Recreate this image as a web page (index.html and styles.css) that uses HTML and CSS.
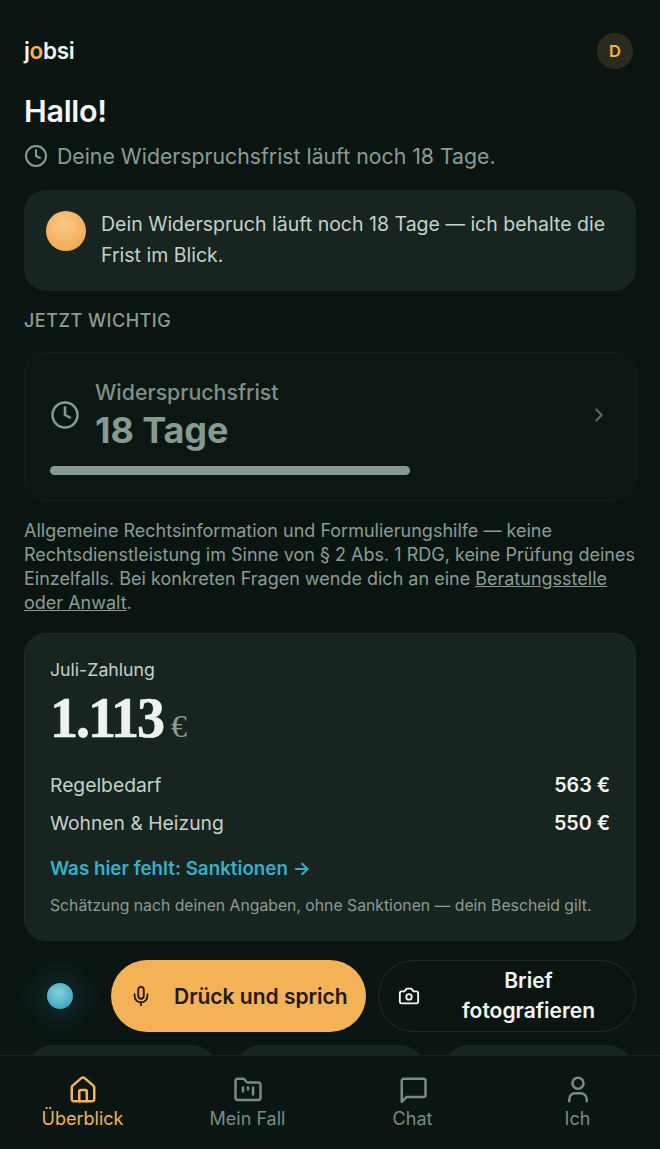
FILE: index.html
```html
<!DOCTYPE html>
<html lang="de">
<head>
<meta charset="UTF-8">
<meta name="viewport" content="width=device-width, initial-scale=1.0">
<title>jobsi</title>
<link rel="stylesheet" href="styles.css">
</head>
<body>
<div class="app">
    <main class="content">
        <header class="topbar">
            <div class="logo">j<span class="logo-accent">o</span>bsi</div>
            <div class="avatar">D</div>
        </header>

        <h1 class="greeting">Hallo!</h1>
        <div class="deadline-line">
            <svg class="icon-clock-small" viewBox="0 0 24 24" fill="none" stroke="currentColor" stroke-width="2" stroke-linecap="round" stroke-linejoin="round"><circle cx="12" cy="12" r="10"/><path d="M12 6v6l4 2"/></svg>
            <span>Deine Widerspruchsfrist läuft noch 18 Tage.</span>
        </div>

        <section class="note-card">
            <div class="orb-amber"></div>
            <p class="note-text">Dein Widerspruch läuft noch 18 Tage — ich behalte die Frist im Blick.</p>
        </section>

        <div class="section-label">JETZT WICHTIG</div>

        <section class="deadline-card">
            <div class="deadline-row">
                <svg class="icon-clock" viewBox="0 0 24 24" fill="none" stroke="currentColor" stroke-width="2" stroke-linecap="round" stroke-linejoin="round"><circle cx="12" cy="12" r="10"/><path d="M12 6v6l4 2"/></svg>
                <div class="deadline-text">
                    <div class="deadline-title">Widerspruchsfrist</div>
                    <div class="deadline-value">18 Tage</div>
                </div>
                <svg class="icon-chevron" viewBox="0 0 24 24" fill="none" stroke="currentColor" stroke-width="2" stroke-linecap="round" stroke-linejoin="round"><path d="M9 18l6-6-6-6"/></svg>
            </div>
            <div class="progress"><div class="progress-bar" style="width: 64.3%"></div></div>
        </section>

        <p class="legal">Allgemeine Rechtsinformation und Formulierungshilfe — keine Rechtsdienstleistung im Sinne von § 2 Abs. 1 RDG, keine Prüfung deines Einzelfalls. Bei konkreten Fragen wende dich an eine <a href="#">Beratungsstelle</a> <a href="#">oder Anwalt</a>.</p>

        <section class="payment-card">
            <div class="payment-label">Juli-Zahlung</div>
            <div class="payment-total">1.113 <span class="payment-currency">€</span></div>
            <div class="payment-row"><span>Regelbedarf</span><strong>563 €</strong></div>
            <div class="payment-row"><span>Wohnen &amp; Heizung</span><strong>550 €</strong></div>
            <a class="payment-link" href="#">Was hier fehlt: Sanktionen →</a>
            <p class="payment-hint">Schätzung nach deinen Angaben, ohne Sanktionen — dein Bescheid gilt.</p>
        </section>

        <div class="actions">
            <div class="orb-slot"><div class="orb-blue"></div></div>
            <button class="btn-talk">
                <svg class="btn-icon" viewBox="0 0 24 24" fill="none" stroke="currentColor" stroke-width="2" stroke-linecap="round" stroke-linejoin="round"><path d="M12 2a3 3 0 0 0-3 3v7a3 3 0 0 0 6 0V5a3 3 0 0 0-3-3z"/><path d="M19 10v2a7 7 0 0 1-14 0v-2"/><path d="M12 19v3"/></svg>
                <span>Drück und sprich</span>
            </button>
            <button class="btn-photo">
                <svg class="btn-icon" viewBox="0 0 24 24" fill="none" stroke="currentColor" stroke-width="2" stroke-linecap="round" stroke-linejoin="round"><path d="M14.5 4h-5L7 7H4a2 2 0 0 0-2 2v9a2 2 0 0 0 2 2h16a2 2 0 0 0 2-2V9a2 2 0 0 0-2-2h-3z"/><circle cx="12" cy="13" r="3"/></svg>
                <span class="btn-photo-text">Brief fotografieren</span>
            </button>
        </div>

        <div class="chips">
            <div class="chip"></div>
            <div class="chip"></div>
            <div class="chip"></div>
        </div>
    </main>

    <nav class="tabbar">
        <a class="tab tab-active" href="#">
            <svg viewBox="0 0 24 24" fill="none" stroke="currentColor" stroke-width="2" stroke-linecap="round" stroke-linejoin="round"><path d="M3 10a2 2 0 0 1 .7-1.5l7-6a2 2 0 0 1 2.6 0l7 6A2 2 0 0 1 21 10v9a2 2 0 0 1-2 2H5a2 2 0 0 1-2-2z"/><path d="M15 21v-8a1 1 0 0 0-1-1h-4a1 1 0 0 0-1 1v8"/></svg>
            <span>Überblick</span>
        </a>
        <a class="tab" href="#">
            <svg viewBox="0 0 24 24" fill="none" stroke="currentColor" stroke-width="2" stroke-linecap="round" stroke-linejoin="round"><path d="M4 20h16a2 2 0 0 0 2-2V8a2 2 0 0 0-2-2h-7.9a2 2 0 0 1-1.7-.9l-.8-1.2A2 2 0 0 0 7.9 3H4a2 2 0 0 0-2 2v13a2 2 0 0 0 2 2z"/><path d="M8 10v3M12 10v1.500M16 10v5.500"/></svg>
            <span>Mein Fall</span>
        </a>
        <a class="tab" href="#">
            <svg viewBox="0 0 24 24" fill="none" stroke="currentColor" stroke-width="2" stroke-linecap="round" stroke-linejoin="round"><path d="M22 16a1.500 1.500 0 0 1-1.500 1.500H7L3 21.500V4.500A1.500 1.500 0 0 1 4.500 3h16A1.500 1.500 0 0 1 22 4.500z"/></svg>
            <span>Chat</span>
        </a>
        <a class="tab" href="#">
            <svg viewBox="0 0 24 24" fill="none" stroke="currentColor" stroke-width="2" stroke-linecap="round" stroke-linejoin="round"><path d="M5 21v-1.500a5 5 0 0 1 5-5h4a5 5 0 0 1 5 5V21"/><circle cx="12" cy="6.500" r="4.400"/></svg>
            <span>Ich</span>
        </a>
    </nav>
</div>
</body>
</html>
```

FILE: styles.css
```css
* {
    box-sizing: border-box;
}
html, body {
    margin: 0;
    padding: 0;
    height: 100%;
}
body {
    background-color: #0a1512;
    color: #f2f6f4;
    font-family: Inter, "Noto Sans", sans-serif;
    overflow: hidden;
}
.app {
    display: flex;
    flex-direction: column;
    height: 100vh;
}
.content {
    flex: 1;
    min-height: 0;
    overflow: hidden;
    padding: 33px 24px 0;
}

/* header */
.topbar {
    display: flex;
    justify-content: space-between;
    align-items: center;
    height: 36px;
    padding-right: 3px;
}
.logo {
    font-size: 22.5px;
    font-weight: 600;
    letter-spacing: -0.3px;
    color: #f2f6f4;
    margin-top: -2px;
}
.logo-accent {
    color: #f4b256;
}
.avatar {
    width: 36px;
    height: 36px;
    border-radius: 50%;
    background-color: #2b2a1f;
    color: #f4b256;
    font-size: 16.5px;
    font-weight: 600;
    display: flex;
    align-items: center;
    justify-content: center;
}
.greeting {
    font-size: 30.5px;
    font-weight: 600;
    line-height: 36px;
    letter-spacing: -0.3px;
    margin: 24px 0 0;
}
.deadline-line {
    display: flex;
    align-items: center;
    gap: 9px;
    color: #8b9c95;
    font-size: 21.25px;
    line-height: 28px;
    margin-top: 13px;
}
.icon-clock-small {
    width: 24px;
    height: 24px;
}

/* assistant note */
.note-card {
    display: flex;
    align-items: flex-start;
    gap: 15px;
    background-color: #18241f;
    border-radius: 22px;
    margin-top: 20px;
    height: 101px;
    padding: 19px 22px;
}
.orb-amber {
    flex: none;
    width: 40px;
    height: 40px;
    margin-top: 2px;
    border-radius: 50%;
    background: radial-gradient(circle at 45% 35%, #fbc987, #f0ab58 75%, #e49f4f);
}
.note-text {
    margin: 0;
    color: #c5d0cb;
    font-size: 19.5px;
    line-height: 31px;
}
.section-label {
    color: #8b9c95;
    font-size: 18px;
    font-weight: 500;
    line-height: 22px;
    letter-spacing: 0.5px;
    margin-top: 19px;
}

/* deadline card */
.deadline-card {
    height: 149px;
    margin-top: 20px;
    padding: 24px 25px;
    border: 1px solid #131f1b;
    border-radius: 22px;
    background-color: #0c1714;
}
.deadline-row {
    display: flex;
    align-items: center;
    gap: 15px;
}
.icon-clock {
    width: 30px;
    height: 30px;
    color: #879a92;
    flex: none;
}
.deadline-text {
    flex: 1;
}
.deadline-title {
    color: #7f9088;
    font-size: 21.3px;
    font-weight: 500;
    line-height: 31px;
}
.deadline-value {
    color: #879a92;
    font-size: 36px;
    font-weight: 700;
    line-height: 44px;
    letter-spacing: -0.1px;
}
.icon-chevron {
    width: 22px;
    height: 22px;
    color: #5d6d67;
}
.progress {
    margin-top: 14px;
    height: 9px;
    border-radius: 5px;
}
.progress-bar {
    height: 100%;
    border-radius: 5px;
    background-color: #879a92;
}
.legal {
    color: #8b9c95;
    font-size: 18px;
    line-height: 24px;
    margin: 18px 0 0;
}
.legal a {
    color: inherit;
}

/* payment card */
.payment-card {
    height: 308px;
    margin-top: 18px;
    padding: 24px 25px;
    background-color: #18241f;
    border: 1px solid #1e2b26;
    border-radius: 22px;
}
.payment-label {
    color: #c5d0cb;
    font-size: 17.7px;
    line-height: 24px;
}
.payment-total {
    font-family: "Liberation Serif", "DejaVu Serif", serif;
    font-size: 56px;
    font-weight: 700;
    line-height: 60px;
    letter-spacing: -2px;
    word-spacing: -4px;
    margin-top: 6px;
    color: #eef3f0;
    -webkit-text-stroke: 0.7px #eef3f0;
}
.payment-currency {
    color: #8b9c95;
    font-size: 32px;
    font-weight: 400;
    letter-spacing: 0;
    -webkit-text-stroke: 0;
}
.payment-row {
    display: flex;
    justify-content: space-between;
    align-items: center;
    color: #c5d0cb;
    font-size: 19.3px;
    line-height: 38px;
}
.payment-row strong {
    color: #f2f6f4;
    font-size: 19.7px;
    font-weight: 600;
}
.payment-total + .payment-row {
    margin-top: 10px;
}
.payment-link {
    display: block;
    color: #35b0cc;
    font-size: 18.8px;
    font-weight: 600;
    line-height: 26px;
    text-decoration: none;
    margin-top: 14px;
}
.payment-hint {
    color: #8b9c95;
    font-size: 15.75px;
    line-height: 22px;
    margin: 13px 0 0;
}

/* actions */
.actions {
    display: flex;
    align-items: center;
    gap: 12px;
    margin-top: 19px;
}
.orb-slot {
    width: 75px;
    flex: none;
    display: flex;
    justify-content: center;
}
.orb-blue {
    width: 26px;
    height: 26px;
    margin-right: 3px;
    border-radius: 50%;
    background: radial-gradient(circle at 45% 38%, #86d3de, #3fa8c0 72%, #2d8fa6);
    box-shadow: 0 0 26px 10px rgba(40, 140, 170, 0.17);
}
.btn-talk, .btn-photo {
    font-family: inherit;
    display: flex;
    align-items: center;
    height: 72px;
    border-radius: 36px;
    font-size: 21px;
    font-weight: 600;
}
.btn-talk {
    width: 255px;
    flex: none;
    gap: 22px;
    padding: 0 0 0 19px;
    background-color: #f4b256;
    color: #241a0c;
    border: none;
    white-space: nowrap;
}
.btn-photo {
    flex: 1;
    padding: 0 22px 0 19px;
    gap: 24px;
    background-color: transparent;
    color: #f2f6f4;
    border: 1px solid #1e2b26;
    line-height: 30px;
}
.btn-icon {
    width: 22px;
    height: 22px;
    flex: none;
}
.btn-photo-text {
    flex: 1;
    text-align: center;
}

/* row cut off by the tab bar */
.chips {
    display: grid;
    grid-template-columns: repeat(3, 1fr);
    gap: 12px;
    margin-top: 13px;
}
.chip {
    height: 60px;
    border-radius: 30px;
    background-color: #18241f;
}

/* tab bar */
.tabbar {
    flex: none;
    height: 94px;
    display: grid;
    grid-template-columns: repeat(4, 1fr);
    background-color: #0b1613;
    border-top: 1px solid #16211d;
    padding-top: 19px;
}
.tab {
    display: flex;
    flex-direction: column;
    align-items: center;
    gap: 2px;
    color: #7a8b84;
    font-size: 18px;
    line-height: 24px;
    text-decoration: none;
}
.tab svg {
    width: 30px;
    height: 30px;
}
.tab-active {
    color: #f4b256;
}
```
